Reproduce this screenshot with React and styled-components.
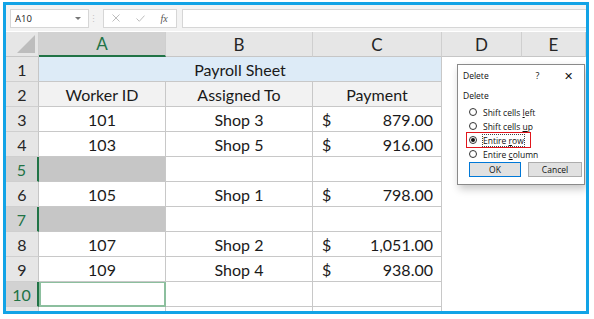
import React from 'react'
import styled, { createGlobalStyle } from 'styled-components'

const Global = createGlobalStyle`
  html, body { margin: 0; padding: 0; background: #fff; }
  body { font-family: "Open Sans", "Liberation Sans", sans-serif; }
`

const green = '#217346'

const Frame = styled.div`
  position: relative;
  margin: 2px 0 0 3px;
  width: 586px;
  height: 312px;
  box-sizing: border-box;
  border: 3px solid #12a3e6;
  overflow: hidden;
  background: #fff;
`

const FormulaBar = styled.div`
  display: flex;
  align-items: center;
  height: 26px;
  padding: 0 0 0 4px;
  background: #f3f3f3;
  box-sizing: border-box;
`

const NameBox = styled.div`
  display: flex;
  align-items: center;
  justify-content: space-between;
  width: 79px;
  height: 19px;
  box-sizing: border-box;
  border: 1px solid #d6d6d6;
  background: #fff;
  padding: 0 7px 0 4px;
  font-size: 9.5px;
  color: #222;
`

const Caret = styled.span`
  width: 0;
  height: 0;
  border-left: 3px solid transparent;
  border-right: 3px solid transparent;
  border-top: 3px solid #777;
`

const Dots = styled.span`
  width: 6px;
  text-align: center;
  color: #c4c4c4;
  font-size: 9px;
`

const IconBox = styled.div`
  display: flex;
  align-items: center;
  width: 74px;
  height: 19px;
  margin-left: 8px;
  box-sizing: border-box;
  border: 1px solid #d6d6d6;
  background: #fff;
`

const IconSlot = styled.span`
  display: flex;
  align-items: center;
  justify-content: center;
  width: 24px;
  color: #bdbdbd;
`

const Fx = styled.span`
  font-family: "Liberation Serif", serif;
  font-style: italic;
  font-size: 10px;
  color: #555;
`

const FormulaInput = styled.div`
  flex: 1;
  height: 19px;
  margin-left: 5px;
  box-sizing: border-box;
  border: 1px solid #d6d6d6;
  border-right: none;
  background: #fff;
`

const Sheet = styled.div`
  display: grid;
  grid-template-columns: 33px 127px 147px 129px 80px 1fr;
  grid-auto-rows: 25px;
  margin-top: 1px;
  font-family: "Lato", "Open Sans", sans-serif;
`

const Corner = styled.div`
  background: #e6e6e6;
  border-right: 1px solid #cfcfcf;
  border-bottom: 1px solid #c6c6c6;
  position: relative;
  &::after {
    content: '';
    position: absolute;
    right: 3px;
    bottom: 3px;
    border-left: 18px solid transparent;
    border-bottom: 18px solid #bdbdbd;
  }
`

const ColHead = styled.div`
  display: flex;
  align-items: center;
  justify-content: center;
  box-sizing: border-box;
  font-size: 17px;
  background: ${p => (p.$sel ? '#d2d2d2' : '#e6e6e6')};
  color: ${p => (p.$sel ? green : '#262626')};
  border-right: 1px solid #cfcfcf;
  border-bottom: ${p => (p.$sel ? `2px solid ${green}` : '1px solid #c6c6c6')};
  &:last-child { border-right: none; }
`

const RowHead = styled.div`
  display: flex;
  align-items: center;
  justify-content: center;
  box-sizing: border-box;
  font-size: 16px;
  background: ${p => (p.$sel ? '#d2d2d2' : '#e6e6e6')};
  color: ${p => (p.$sel ? green : '#262626')};
  border-bottom: 1px solid #cfcfcf;
  border-right: ${p => (p.$sel ? `2px solid ${green}` : '1px solid #c6c6c6')};
`

const Cell = styled.div`
  display: flex;
  align-items: center;
  justify-content: center;
  box-sizing: border-box;
  font-size: 16px;
  color: #1a1a1a;
  grid-column: ${p => p.$span || 'auto'};
  background: ${p => p.$bg || '#fff'};
  border-right: 1px solid #c8c8c8;
  border-bottom: 1px solid #c8c8c8;
  padding: 0 8px;
`

const ActiveCell = styled(Cell)`
  border: 2px solid #8cbf9e;
  border-top: 1px solid #8cbf9e;
`

const Money = styled(Cell)`
  justify-content: space-between;
  padding: 0 8px 0 9px;
`

const Blank = styled.div`
  background: #fff;
`

const Dialog = styled.div`
  position: absolute;
  left: 451px;
  top: 59px;
  width: 128px;
  height: 121px;
  box-sizing: border-box;
  border: 1px solid #8a8a8a;
  background: #fff;
  box-shadow: 2px 4px 8px rgba(0, 0, 0, 0.22);
  font-family: "Open Sans", "Noto Sans", sans-serif;
  font-size: 8.5px;
  color: #111;
  display: flex;
  flex-direction: column;
`

const TitleBar = styled.div`
  display: flex;
  align-items: center;
  height: 21px;
  padding-left: 5px;
`

const Title = styled.span`
  flex: 1;
`

const TitleBtn = styled.span`
  width: 31px;
  text-align: center;
  font-size: ${p => p.$size || '9px'};
`

const Body = styled.div`
  display: flex;
  flex-direction: column;
  padding: 4px 0 0 5px;
`

const GroupLabel = styled.div`
  height: 12px;
  line-height: 12px;
  margin-bottom: 3px;
`

const Option = styled.div`
  display: flex;
  align-items: center;
  gap: 6px;
  height: 14px;
  width: fit-content;
  box-sizing: border-box;
  margin-left: 6px;
  ${p => p.$boxed && `
    height: 16px;
    margin: -1px 0 -1px 3px;
    padding: 0 6px 0 2px;
    border: 1px solid #e0161c;
  `}
`

const Radio = styled.span`
  width: 8px;
  height: 8px;
  border-radius: 50%;
  border: 1px solid #333;
  box-sizing: border-box;
  display: flex;
  align-items: center;
  justify-content: center;
  background: #fff;
  &::after {
    content: '';
    width: 4px;
    height: 4px;
    border-radius: 50%;
    background: ${p => (p.$on ? '#111' : 'transparent')};
  }
`

const OptText = styled.span`
  outline: ${p => (p.$focus ? '1px dotted #444' : 'none')};
  line-height: 11px;
  u { text-decoration: underline; }
`

const Buttons = styled.div`
  display: flex;
  gap: 7px;
  margin-top: 1px;
  padding-left: 11px;
`

const Button = styled.div`
  width: ${p => p.$w}px;
  height: 15px;
  box-sizing: border-box;
  display: flex;
  align-items: center;
  justify-content: center;
  background: #e1e1e1;
  border: 1px solid ${p => (p.$primary ? '#0078d7' : '#adadad')};
`

const rows = [
  { n: 1 },
  { n: 2, cells: ['Worker ID', 'Assigned To', 'Payment'] },
  { n: 3, cells: ['101', 'Shop 3', '879.00'] },
  { n: 4, cells: ['103', 'Shop 5', '916.00'] },
  { n: 5, empty: true },
  { n: 6, cells: ['105', 'Shop 1', '798.00'] },
  { n: 7, empty: true },
  { n: 8, cells: ['107', 'Shop 2', '1,051.00'] },
  { n: 9, cells: ['109', 'Shop 4', '938.00'] },
  { n: 10, active: true },
  { n: 11, plain: true },
]

function Row({ r }) {
  const sel = r.empty || r.active
  const out = [<RowHead key="h" $sel={sel}>{r.plain ? '' : r.n}</RowHead>]
  if (r.n === 1) {
    out.push(<Cell key="t" $span="span 3" $bg="#ddebf7">Payroll Sheet</Cell>)
  } else if (r.n === 2) {
    r.cells.forEach((c, i) => out.push(<Cell key={i} $bg="#f2f2f2">{c}</Cell>))
  } else if (r.cells) {
    out.push(<Cell key="a">{r.cells[0]}</Cell>)
    out.push(<Cell key="b">{r.cells[1]}</Cell>)
    out.push(<Money key="c"><span>$</span><span>{r.cells[2]}</span></Money>)
  } else if (r.empty) {
    out.push(<Cell key="a" $bg="#c6c6c6" />, <Cell key="b" />, <Cell key="c" />)
  } else if (r.active) {
    out.push(<ActiveCell key="a" />, <Cell key="b" />, <Cell key="c" />)
  } else {
    out.push(<Cell key="a" />, <Cell key="b" />, <Cell key="c" />)
  }
  out.push(<Blank key="d" />, <Blank key="e" />)
  return out
}

export default function App() {
  return (
    <>
      <Global />
      <Frame>
        <FormulaBar>
          <NameBox>A10<Caret /></NameBox>
          <Dots>⋮</Dots>
          <IconBox>
            <IconSlot>
              <svg width="8" height="8" viewBox="0 0 8 8"><path d="M0.5 0.5L7.5 7.5M7.5 0.5L0.5 7.5" stroke="#bdbdbd" strokeWidth="1" /></svg>
            </IconSlot>
            <IconSlot>
              <svg width="9" height="7" viewBox="0 0 9 7"><path d="M0.5 3.5L3.3 6.3L8.5 0.6" stroke="#bdbdbd" strokeWidth="1" fill="none" /></svg>
            </IconSlot>
            <IconSlot><Fx>fx</Fx></IconSlot>
          </IconBox>
          <FormulaInput />
        </FormulaBar>
        <Sheet>
          <Corner />
          <ColHead $sel>A</ColHead>
          <ColHead>B</ColHead>
          <ColHead>C</ColHead>
          <ColHead>D</ColHead>
          <ColHead>E</ColHead>
          {rows.map(r => <Row key={r.n} r={r} />)}
        </Sheet>
        <Dialog>
          <TitleBar>
            <Title>Delete</Title>
            <TitleBtn>?</TitleBtn>
            <TitleBtn $size="11px">✕</TitleBtn>
          </TitleBar>
          <Body>
            <GroupLabel>Delete</GroupLabel>
            <Option><Radio /><OptText>Shift cells <u>l</u>eft</OptText></Option>
            <Option><Radio /><OptText>Shift cells <u>u</u>p</OptText></Option>
            <Option $boxed><Radio $on /><OptText $focus>Entire <u>r</u>ow</OptText></Option>
            <Option><Radio /><OptText>Entire <u>c</u>olumn</OptText></Option>
          </Body>
          <Buttons>
            <Button $w={52} $primary>OK</Button>
            <Button $w={54}>Cancel</Button>
          </Buttons>
        </Dialog>
      </Frame>
    </>
  )
}
